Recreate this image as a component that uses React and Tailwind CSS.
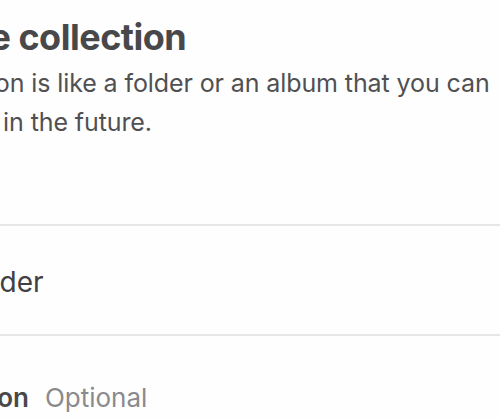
export default function App() {
  return (
    <div
      className="w-[500px] h-[418px] overflow-hidden bg-[#fefefe]"
      style={{ fontFamily: "Inter, 'Noto Sans', sans-serif" }}
    >
      <div className="pt-[15px]">
        <h1 className="ml-[-104px] whitespace-nowrap text-[36px] leading-[44px] font-bold text-[#48484a] tracking-[-0.5px]">
          Create collection
        </h1>
        <p className="mt-[5px] whitespace-nowrap text-[25px] leading-[39px] text-[#505052] tracking-[-0.1px]">
          <span className="block ml-[-113px]">A collection is like a folder or an album that you can</span>
          <span className="block ml-[-104px]">return to in the future.</span>
        </p>
        <div className="mt-[82px] h-[112px] border-y-2 border-[#e6e6e8] flex items-center">
          <span className="ml-[-186px] pt-[4px] whitespace-nowrap text-[28px] text-[#404042]">
            Name your folder
          </span>
        </div>
        <div className="mt-[47px] ml-[-116px] whitespace-nowrap text-[26px] leading-[30px]">
          <span className="font-semibold text-[#48484a]">Description</span>
          <span className="ml-[16px] text-[#8a8a8e]">Optional</span>
        </div>
      </div>
    </div>
  );
}
